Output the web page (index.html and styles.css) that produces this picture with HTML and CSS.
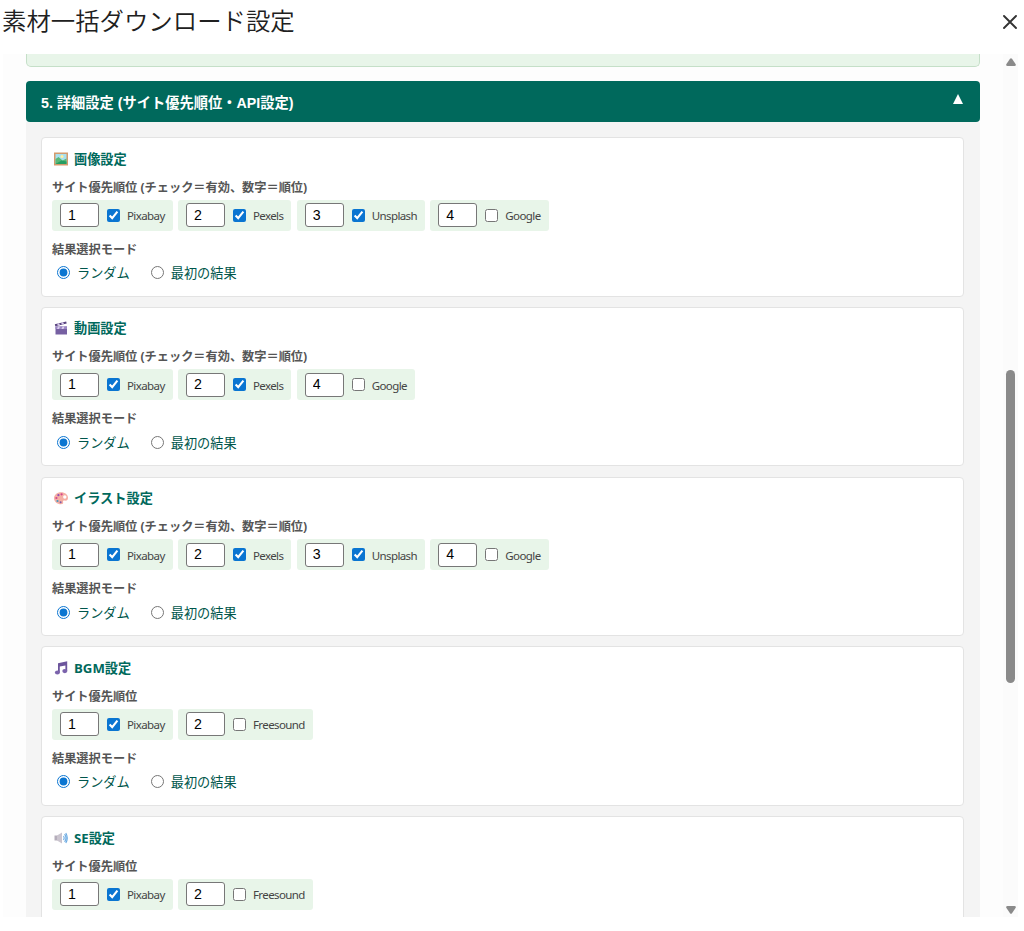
FILE: index.html
```html
<!DOCTYPE html>
<html lang="ja">

<head>
     <meta charset="UTF-8">
     <meta name="viewport" content="width=device-width, initial-scale=1.0">
     <title>素材一括ダウンロード設定</title>
     <link rel="stylesheet" href="styles.css">
</head>

<body>
     <header class="dialog-header">
          <h1>素材一括ダウンロード設定</h1>
          <svg class="close" viewBox="0 0 14 14"><path d="M1 1L13 13M13 1L1 13"/></svg>
     </header>
     <main class="dialog-body">
          <div class="content">
               <div class="prev-section"></div>
               <div class="section-header">
                    <span>5. 詳細設定 (サイト優先順位・API設定)</span>
                    <svg class="arrow" viewBox="0 0 10 10"><path d="M5 0L10 10H0z"/></svg>
               </div>
               <div class="section-body">
                    <section class="card">
                         <h2>
                              <svg class="icon" viewBox="0 0 14 14"><path fill="#d39a6c" d="M0 .5h14v13H0z"/><path fill="#a8e0ee" d="M1.5 2h11v10h-11z"/><circle cx="8" cy="4.5" r="1.5" fill="#fff0a0"/><path fill="#58b878" d="M1.5 7l3-2 4 3.5 4-2V12h-11z"/><path fill="#269d62" d="M1.5 12l6-3.5 5 1V12z"/></svg>
                              画像設定
                         </h2>
                         <p class="label">サイト優先順位 (チェック＝有効、数字＝順位)</p>
                         <div class="sites">
                              <label class="site"><input type="text" value="1"><input type="checkbox" checked><span>Pixabay</span></label>
                              <label class="site"><input type="text" value="2"><input type="checkbox" checked><span>Pexels</span></label>
                              <label class="site"><input type="text" value="3"><input type="checkbox" checked><span>Unsplash</span></label>
                              <label class="site"><input type="text" value="4"><input type="checkbox"><span>Google</span></label>
                         </div>
                         <p class="label">結果選択モード</p>
                         <div class="modes">
                              <label><input type="radio" name="image" checked>ランダム</label>
                              <label><input type="radio" name="image">最初の結果</label>
                         </div>
                    </section>
                    <section class="card">
                         <h2>
                              <svg class="icon" viewBox="0 0 14 14"><path fill="#7660a2" d="M1.5 5.5h11.5v8H1.5z"/><path fill="#9b86c4" d="M1.5 5.5h11.5V8H1.5z"/><path fill="#59437f" d="M.8 3.3L12.2 .6l.5 2L1.3 5.3z"/><path fill="#d9cdec" d="M3 2.8l2-.5 1 1.7-2 .5zM7 1.8l2-.5 1 1.8-2 .5zM4 5.5h2L5 8H3zM8.5 5.5h2L9.5 8h-2z"/></svg>
                              動画設定
                         </h2>
                         <p class="label">サイト優先順位 (チェック＝有効、数字＝順位)</p>
                         <div class="sites">
                              <label class="site"><input type="text" value="1"><input type="checkbox" checked><span>Pixabay</span></label>
                              <label class="site"><input type="text" value="2"><input type="checkbox" checked><span>Pexels</span></label>
                              <label class="site"><input type="text" value="4"><input type="checkbox"><span>Google</span></label>
                         </div>
                         <p class="label">結果選択モード</p>
                         <div class="modes">
                              <label><input type="radio" name="video" checked>ランダム</label>
                              <label><input type="radio" name="video">最初の結果</label>
                         </div>
                    </section>
                    <section class="card">
                         <h2>
                              <svg class="icon" viewBox="0 0 14 14"><path fill="#f5afa4" d="M7 1.2c4 0 7 2.4 7 5.6 0 2.5-1.5 3.2-3.2 2.8-1.5-.3-2 .3-1.7 1.3.4 1.3-.5 2.3-2.1 2.3C3 13.2 0 10.5 0 7.2S3 1.2 7 1.2z"/><circle cx="10.8" cy="6" r="1.7" fill="#fff"/><circle cx="7.6" cy="3.3" r="1.1" fill="#d5458c"/><circle cx="4.4" cy="4.2" r="1.1" fill="#8d50b5"/><circle cx="2.4" cy="7" r="1.1" fill="#d5458c"/><circle cx="3.5" cy="10" r="1.1" fill="#4797bd"/><circle cx="6.6" cy="11.3" r="1" fill="#7e5baa"/></svg>
                              イラスト設定
                         </h2>
                         <p class="label">サイト優先順位 (チェック＝有効、数字＝順位)</p>
                         <div class="sites">
                              <label class="site"><input type="text" value="1"><input type="checkbox" checked><span>Pixabay</span></label>
                              <label class="site"><input type="text" value="2"><input type="checkbox" checked><span>Pexels</span></label>
                              <label class="site"><input type="text" value="3"><input type="checkbox" checked><span>Unsplash</span></label>
                              <label class="site"><input type="text" value="4"><input type="checkbox"><span>Google</span></label>
                         </div>
                         <p class="label">結果選択モード</p>
                         <div class="modes">
                              <label><input type="radio" name="illust" checked>ランダム</label>
                              <label><input type="radio" name="illust">最初の結果</label>
                         </div>
                    </section>
                    <section class="card">
                         <h2>
                              <svg class="icon" viewBox="0 0 14 14"><path fill="#6c559c" d="M4 2.2L13.2 .3v9.9h-1.8V4.4L5.8 5.6v6H4z"/><ellipse cx="3.4" cy="11.5" rx="2.5" ry="2.1" fill="#7b63ac"/><ellipse cx="10.8" cy="10.1" rx="2.5" ry="2.1" fill="#7b63ac"/></svg>
                              BGM設定
                         </h2>
                         <p class="label">サイト優先順位</p>
                         <div class="sites">
                              <label class="site"><input type="text" value="1"><input type="checkbox" checked><span>Pixabay</span></label>
                              <label class="site"><input type="text" value="2"><input type="checkbox"><span>Freesound</span></label>
                         </div>
                         <p class="label">結果選択モード</p>
                         <div class="modes">
                              <label><input type="radio" name="bgm" checked>ランダム</label>
                              <label><input type="radio" name="bgm">最初の結果</label>
                         </div>
                    </section>
                    <section class="card">
                         <h2>
                              <svg class="icon" viewBox="0 0 14 14"><path fill="#b5aebb" d="M.5 4.5h3v5h-3z"/><path fill="#cbc5cf" d="M3 4.5L8 1.5v11L3 9.5z"/><path fill="none" stroke="#69a9e2" stroke-width="1.1" d="M9.5 5q1.3 2 0 4M10.6 3.2q2.8 3.8 0 7.6M11.8 2q3 5 0 10"/></svg>
                              SE設定
                         </h2>
                         <p class="label">サイト優先順位</p>
                         <div class="sites">
                              <label class="site"><input type="text" value="1"><input type="checkbox" checked><span>Pixabay</span></label>
                              <label class="site"><input type="text" value="2"><input type="checkbox"><span>Freesound</span></label>
                         </div>
                    </section>
               </div>
          </div>
          <div class="scrollbar">
               <svg viewBox="0 0 10 8"><path d="M4 .8Q5-.4 6 .8L9.7 6.3Q10.2 8 8.5 8h-7Q-.2 8 .3 6.3z"/></svg>
               <div class="track"><div class="thumb"></div></div>
               <svg class="down" viewBox="0 0 10 8"><path d="M4 .8Q5-.4 6 .8L9.7 6.3Q10.2 8 8.5 8h-7Q-.2 8 .3 6.3z"/></svg>
          </div>
     </main>
</body>
</html>
```

FILE: styles.css
```css
*,
*:before,
*:after {
     box-sizing: border-box;
}

body {
     margin: 0;
     height: 931px;
     overflow: hidden;
     background-color: #fff;
     font-family: "Open Sans", "Noto Sans CJK JP", sans-serif;
}

h1,
h2,
p {
     margin: 0;
}

.dialog-header {
     display: flex;
     justify-content: space-between;
     height: 54px;
     padding: 2px 7px 0 2px;
}

h1 {
     color: #202020;
     font-family: "Noto Sans CJK JP", sans-serif;
     font-size: 24.4px;
     font-weight: 350;
     line-height: 36px;
}

.close {
     width: 14px;
     height: 14px;
     margin-top: 13px;
     fill: none;
     stroke: #333;
     stroke-width: 1.9;
     stroke-linecap: round;
}

.dialog-body {
     display: flex;
     justify-content: space-between;
     width: 1015px;
     height: 863px;
     margin-left: 3px;
     padding-left: 23px;
     background-color: #fdfdfd;
     overflow: hidden;
}

.content {
     width: 954px;
}

.prev-section {
     height: 13px;
     margin-bottom: 14px;
     border: 1px solid #c5dfc8;
     border-top: 0;
     border-radius: 0 0 5px 5px;
     background-color: #e8f5e9;
}

.section-header {
     display: flex;
     justify-content: space-between;
     align-items: center;
     height: 41px;
     padding: 0 17px 1px 15px;
     border-radius: 4px;
     background-color: #00695c;
     color: #fff;
     font-family: "Liberation Sans", "Noto Sans CJK JP", sans-serif;
     font-size: 14.25px;
     font-weight: bold;
}

.arrow {
     width: 10px;
     height: 10px;
     margin-bottom: 4px;
     fill: #fff;
}

.section-body {
     display: flex;
     flex-direction: column;
     gap: 10.2px;
     padding: 15.2px 16px 15.2px 15px;
     background-color: #f4f4f4;
}

.card {
     height: 159.5px;
     padding: 9.6px 10px;
     border: 1px solid #e3e3e3;
     border-radius: 4px;
     background-color: #fff;
}

.card h2 {
     display: flex;
     align-items: center;
     gap: 6px;
     height: 22px;
     margin-bottom: 8px;
     padding-left: 2px;
     color: #00695c;
     font-size: 13.2px;
     font-weight: bold;
     line-height: 22px;
}

.icon {
     width: 14px;
     height: 14px;
}

.label {
     height: 20px;
     color: #555;
     font-size: 12.2px;
     font-weight: bold;
     line-height: 20px;
}

.sites {
     display: flex;
     gap: 5.3px;
     margin: 2px 0 9px;
}

.site {
     display: flex;
     align-items: center;
     height: 31px;
     padding: 0 8px;
     border-radius: 3px;
     background-color: #e8f5e9;
     color: #444;
     font-family: "Noto Sans", sans-serif;
     font-size: 11.5px;
     letter-spacing: -.6px;
}

.site span {
     padding-top: 1px;
}

.site input[type="text"] {
     width: 39px;
     height: 24px;
     margin: 0 8px 0 0;
     padding: 0 0 1px 7px;
     border: 1px solid #777;
     border-radius: 3px;
     background-color: #fff;
     color: #000;
     font-family: "Liberation Sans", sans-serif;
     font-size: 14.2px;
}

input[type="checkbox"],
input[type="radio"] {
     width: 13px;
     height: 13px;
     margin: 0 7px 0 0;
     accent-color: #0a75d1;
}

.modes {
     display: flex;
     align-items: center;
     gap: 21px;
     height: 20px;
     margin-top: 3px;
     padding-left: 5px;
     color: #00564b;
     font-size: 13.2px;
}

.modes label {
     display: flex;
     align-items: center;
}

.scrollbar {
     display: flex;
     flex-direction: column;
     align-items: center;
     width: 15px;
     padding: 4px 0 3px;
     background-color: #fbfbfb;
}

.scrollbar svg {
     width: 10px;
     height: 8px;
     fill: #8a8a8a;
}

.scrollbar .down {
     transform: rotate(180deg);
}

.track {
     flex-grow: 1;
     padding-top: 304px;
}

.thumb {
     width: 9px;
     height: 313px;
     border-radius: 5px;
     background-color: #8a8a8a;
}
```
